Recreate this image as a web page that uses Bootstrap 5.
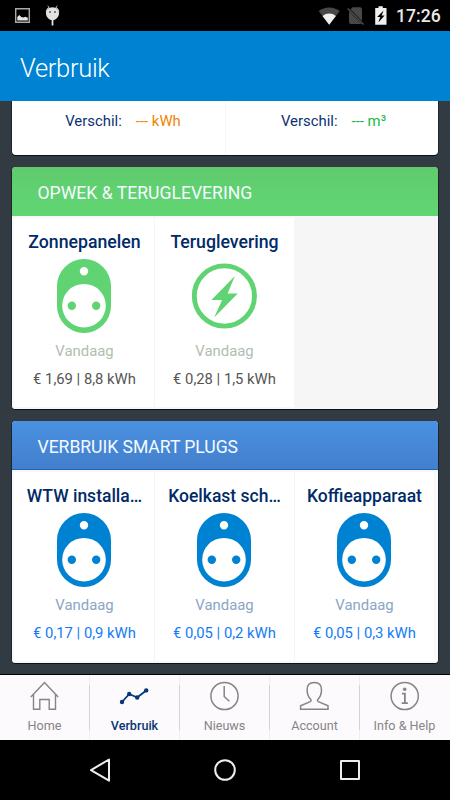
<!DOCTYPE html>
<html lang="nl">
<head>
<meta charset="utf-8">
<meta name="viewport" content="width=device-width, initial-scale=1">
<title>Verbruik</title>
<link href="https://cdn.jsdelivr.net/npm/bootstrap@5.3.0/dist/css/bootstrap.min.css" rel="stylesheet">
<style>
body{font-family:Roboto,"Liberation Sans",sans-serif;background:#333b42;width:450px;height:800px}
svg{display:block;flex:none}
.statusbar{height:31px;background:#000;color:#e8e8e8;padding-right:9px}
.clock{font-size:17.6px;font-weight:500;line-height:32px;width:45px;margin-left:9px;white-space:nowrap}
.titlebar{height:70px;background:#0082d2}
.titlebar h1{font-size:25.5px;font-weight:300;line-height:30px;letter-spacing:-.3px;padding:22px 0 0 20px}
.content{height:573px;padding:0 12px}
.panel{border-radius:4px;background:#fff;box-shadow:0 1px 0 #06131b,-.5px 0 0 #06131b,.5px 0 0 #06131b;overflow:hidden}
.diff{height:54px;border-radius:0 0 4px 4px;margin-bottom:12px;font-size:14.9px;line-height:20px}
.diff>div{padding-top:10px;color:#0c3270}
.diff>div:first-child{padding-left:9px}
.diff>div+div{border-left:1px solid #f6f6f6;padding-left:3px}
.diff span+span{margin-left:14px}
.orange{color:#f08400}.lime{color:#16bb3c}
.meters{height:242px;margin-bottom:12px}
.meters h2{height:49px;font-size:17.6px;font-weight:400;line-height:52px;padding-left:25.5px;color:#f4fbff}
.green h2{background:linear-gradient(#5fcb6e,#62d673)}
.blue h2{background:linear-gradient(#4a91e2,#437fcc);border-bottom:1px solid #1567bd;letter-spacing:-.05px}
.cells{height:193px;padding:2px 4px 2px 2px;box-shadow:inset 0 2px #f7f7f7,inset 0 -2px #f7f7f7,inset 2px 0 #fafafa,inset -4px 0 #fafafa}
.green .cells{box-shadow:inset 0 2px #f7f7f7,inset 0 -2px #f7f7f7,inset 2px 0 #fafafa,inset -144px 0 #f6f6f6}
.meter{width:140px;line-height:20px}
.meter+.meter{box-shadow:inset 1px 0 #f5f5f5}
.meter h3{font-size:17.7px;font-weight:500;line-height:22px;height:41px;padding-top:13px;color:#002b68;white-space:nowrap}
.blue h3{font-size:17.5px}
.meter h3,.period,.value{padding-left:1px}
.period{font-size:14.9px;margin-top:8px;height:28px;color:#b1beb1}
.value{font-size:14.8px;color:#555;white-space:nowrap}
.green{color:#60d372}.blue{color:#0082d2}
.blue .period{color:#8ba6c3}.blue .value{color:#127cf8}
.tabs{height:66px;background:#fcfafc;border-top:1px solid #000;color:#858585;padding-right:1px}
.tabs a{width:90px;color:inherit;font-size:12.6px;line-height:16px;padding-top:5px;position:relative}
.tabs a:first-child{width:89px}
.tabs a+a{border-left:1px solid #f0eef0}
.tabs a+a::before{content:"";position:absolute;left:-1px;top:10px;width:1px;height:45px;background:#d5d3d5}
.tabs a.active{color:#073774;font-weight:500}
.tabs svg{margin-bottom:6px}
.system{height:60px;background:#000}
</style>
<script src="https://cdn.jsdelivr.net/npm/bootstrap@5.3.0/dist/js/bootstrap.bundle.min.js"></script>
</head>
<body class="d-flex flex-column overflow-hidden">
<svg width="0" height="0" class="position-absolute">
  <symbol id="plug" viewBox="0 0 54 74"><path fill="currentColor" fill-rule="evenodd" d="M0 27a27 27 0 0 1 54 0v20a27 27 0 0 1-54 0zM22.8 12.3a4.2 4.2 0 1 0 8.4 0a4.2 4.2 0 1 0-8.4 0zM5.2 46.7a21.8 21.8 0 1 0 43.6 0a21.8 21.8 0 1 0-43.6 0z"/><circle cx="14.8" cy="46.7" r="4.2" fill="currentColor"/><circle cx="39.2" cy="46.7" r="4.2" fill="currentColor"/></symbol>
  <symbol id="bolt" viewBox="0 0 66 74"><circle cx="33.4" cy="37" r="30.1" fill="none" stroke="currentColor" stroke-width="4.9"/><path fill="currentColor" d="M43.9 17 36.6 34.6H46.7L23.2 58.6 31.1 41H20.4z"/></symbol>
</svg>
<header class="statusbar d-flex align-items-center">
  <svg width="70" height="31"><path d="M15.7 8.7h13.6v13.6H15.7z" fill="none" stroke="#aaa" stroke-width="1.4"/><path d="M17.3 20.5v-3.5l2-2 2 2 2 .5 2-.7 2.5 1v2.7z" fill="#e5e5e5"/><path d="M46.3 11.8C46.3 9.8 48 7.6 49.2 7.5L47.6 6M58.8 11.8C58.8 9.8 57 7.6 55.8 7.5L57.4 6" stroke="#ddd" fill="none"/><path d="M46 13.3c0-3.2 2.3-6 6.5-6s6.5 2.8 6.5 6-2.4 6.8-6.5 6.8-6.5-3.6-6.5-6.8zM51.6 20h1.8v5.5h-1.8z" fill="#e2e2e2"/><circle cx="50" cy="12" r=".8"/><circle cx="55" cy="12" r=".8"/></svg>
  <svg width="77" height="31" class="ms-auto"><path d="M8.7 11.1a17.5 17.5 0 0 1 21 0L19.2 24.7z" fill="#484848"/><path d="M12.5 15.9a10.5 10.5 0 0 1 13.4 0L19.2 24.7z" fill="#f0f0f0"/><path d="M42.6 7.3H50q2 0 2 2V24H41q-2 0-2-2V11z" fill="#484848"/><path d="m37 7.5 17.7 18" stroke="#000" stroke-width="2.4"/><path d="m37.7 8.5 15.8 16" stroke="#505050" stroke-width="1.4"/><path d="M65.2 8h3.3V6.3h4.3V8h3.7v16.8H65.2z" fill="#f0f0f0"/><path d="m73.6 10.5-6.5 6.4h3.1l-1.8 5.5 6.2-6.8h-3z"/></svg>
  <span class="clock">17:26</span>
</header>
<header class="titlebar text-white"><h1 class="m-0">Verbruik</h1></header>
<main class="content">
  <section class="panel diff d-flex">
    <div class="w-50 text-center"><span>Verschil:</span><span class="orange">--- kWh</span></div>
    <div class="w-50 text-center"><span>Verschil:</span><span class="lime">--- m³</span></div>
  </section>
  <section class="panel meters green">
    <h2 class="m-0">OPWEK &amp; TERUGLEVERING</h2>
    <div class="cells d-flex">
      <article class="meter text-center"><h3 class="m-0">Zonnepanelen</h3><svg class="mx-auto" width="54" height="74"><use href="#plug"/></svg><div class="period">Vandaag</div><div class="value">€ 1,69 | 8,8 kWh</div></article>
      <article class="meter text-center"><h3 class="m-0">Teruglevering</h3><svg class="mx-auto" width="66" height="74"><use href="#bolt"/></svg><div class="period">Vandaag</div><div class="value">€ 0,28 | 1,5 kWh</div></article>
    </div>
  </section>
  <section class="panel meters blue">
    <h2 class="m-0">VERBRUIK SMART PLUGS</h2>
    <div class="cells d-flex">
      <article class="meter text-center"><h3 class="m-0">WTW installa…</h3><svg class="mx-auto" width="54" height="74"><use href="#plug"/></svg><div class="period">Vandaag</div><div class="value">€ 0,17 | 0,9 kWh</div></article>
      <article class="meter text-center"><h3 class="m-0">Koelkast sch…</h3><svg class="mx-auto" width="54" height="74"><use href="#plug"/></svg><div class="period">Vandaag</div><div class="value">€ 0,05 | 0,2 kWh</div></article>
      <article class="meter text-center"><h3 class="m-0">Koffieapparaat</h3><svg class="mx-auto" width="54" height="74"><use href="#plug"/></svg><div class="period">Vandaag</div><div class="value">€ 0,05 | 0,3 kWh</div></article>
    </div>
  </section>
</main>
<nav class="tabs d-flex text-center">
  <a href="#" class="text-decoration-none"><svg class="mx-auto" width="32" height="32" fill="none" stroke="currentColor" stroke-width="1.4"><path d="M1.8 17 15.5 2.5 29.2 17M4.5 14.5V29.3h6.3V19.5h9.4v9.8h6.3V14.5"/></svg>Home</a>
  <a href="#" class="active text-decoration-none"><svg class="mx-auto" width="32" height="32" fill="currentColor"><path d="m3 22 7.2-8 8 3.5 9-7" fill="none" stroke="currentColor" stroke-width="1.8"/><circle cx="3" cy="22" r="2.2"/><circle cx="10.2" cy="14" r="2.2"/><circle cx="18.2" cy="17.5" r="2.2"/><circle cx="27.2" cy="10.4" r="2.2"/></svg>Verbruik</a>
  <a href="#" class="text-decoration-none"><svg class="mx-auto" width="32" height="32" fill="none" stroke="currentColor" stroke-width="1.5"><circle cx="15.5" cy="16" r="13.6"/><path d="M15.2 6v10.5l5.2 4.7"/></svg>Nieuws</a>
  <a href="#" class="text-decoration-none"><svg class="mx-auto" width="32" height="32" fill="none" stroke="currentColor" stroke-width="1.5"><path transform="translate(-.7)" d="M2.3 29.3v-3.5l9.6-4.2q1.6-.9.4-2.3C9.6 16.5 8.8 13 8.8 9.7c0-4.5 2.8-7.2 7.2-7.2s7.2 2.7 7.2 7.2c0 3.3-.8 6.8-3.5 9.6q-1.2 1.4.4 2.3l9.6 4.2v3.5z"/></svg>Account</a>
  <a href="#" class="text-decoration-none"><svg class="mx-auto" width="32" height="32" fill="none" stroke="currentColor" stroke-width="1.5"><circle cx="15.7" cy="16" r="13.6"/><circle cx="15.7" cy="9.2" r="1.8" fill="currentColor" stroke="none"/><path d="M12.9 13.6h3v9.5M12.7 23.1h6.2" stroke-width="1.8"/></svg>Info &amp; Help</a>
</nav>
<footer class="system">
  <svg width="450" height="60" fill="none" stroke="#eee" stroke-width="2" stroke-linejoin="round"><path d="M109 19.5v21.2L91 30.1z"/><circle cx="225" cy="30" r="9.8"/><path d="M341 21h18v18h-18z"/></svg>
</footer>
</body>
</html>
